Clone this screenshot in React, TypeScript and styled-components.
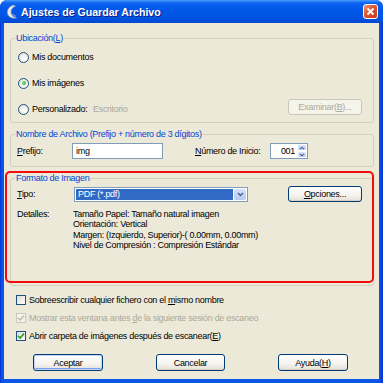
import React from "react";
import styled, { createGlobalStyle } from "styled-components";

const GlobalStyle = createGlobalStyle`
  html, body { margin: 0; padding: 0; background: #ffffff; }
  body {
    font-family: "Liberation Sans", Arial, sans-serif;
    font-size: 9px;
    letter-spacing: -0.3px;
    color: #000;
  }
`;

const Window = styled.div`
  width: 383px;
  height: 383px;
  display: flex;
  flex-direction: column;
  background: linear-gradient(to right, #0831D9 0, #0A56E6 2px, #0A56E6 379px, #0831D9 383px);
  border-radius: 7px 7px 0 0;
  overflow: hidden;
`;

const TitleBar = styled.div`
  height: 23px;
  flex: none;
  display: flex;
  align-items: center;
  padding: 0 5px 0 5px;
  background: linear-gradient(#4A9CFF 0, #0C63F0 3px, #0058EA 9px, #0054E3 17px, #0148D2 23px);
`;

const TitleText = styled.div`
  margin-left: 3px;
  font-weight: bold;
  font-size: 10.6px;
  letter-spacing: 0;
  color: #fff;
  text-shadow: 1px 1px 0 #0A1E8A;
  flex: 1;
`;

const CloseButton = styled.div`
  width: 15px;
  height: 15px;
  box-sizing: border-box;
  border: 1px solid #fff;
  border-radius: 3px;
  background: linear-gradient(135deg, #EE9E84 0%, #DF5A30 40%, #C9391A 100%);
  display: flex;
  align-items: center;
  justify-content: center;
`;

const Body = styled.div`
  flex: 1;
  margin: 0 4px 4px 4px;
  padding: 10px 5px 0 6px;
  background: #ECE9D8;
  display: flex;
  flex-direction: column;
`;

const Fieldset = styled.fieldset<{ $pb?: number }>`
  margin: 0;
  padding: 0 11px ${(p) => p.$pb ?? 0}px 6px;
  border: 1px solid #D0D0BF;
  border-radius: 3px;
  min-width: 0;
`;

const Legend = styled.legend`
  padding: 0 1px;
  margin-left: -2px;
  height: 11px;
  line-height: 11px;
  color: #0046D5;
`;

const GroupGap = styled.div<{ $h: number }>`
  height: ${(p) => p.$h}px;
  flex: none;
`;

const Highlight = styled.div`
  position: relative;
  &::after {
    content: "";
    position: absolute;
    left: -5px;
    top: -2px;
    right: 0;
    bottom: 3px;
    border: 2px solid #F20D0D;
    border-radius: 5px;
    pointer-events: none;
  }
`;

const RadioRow = styled.div`
  height: 26px;
  display: flex;
  align-items: center;
`;

const Radio = styled.span<{ $checked?: boolean }>`
  width: 11px;
  height: 11px;
  box-sizing: border-box;
  margin: 0 3px 0 1px;
  border-radius: 50%;
  border: 1px solid #1C5180;
  background: radial-gradient(circle at 65% 65%, #FFFFFF 0%, #F2F1EC 45%, #D8D6CC 100%);
  display: flex;
  align-items: center;
  justify-content: center;
  &::after {
    content: "";
    display: ${(p) => (p.$checked ? "block" : "none")};
    width: 4px;
    height: 4px;
    border-radius: 50%;
    background: radial-gradient(circle at 35% 35%, #7EE07E, #21A121);
  }
`;

const FixedLabel = styled.span<{ $w: number; $ml?: number }>`
  width: ${(p) => p.$w}px;
  margin-left: ${(p) => p.$ml ?? 0}px;
  flex: none;
  white-space: nowrap;
`;

const Muted = styled.span`
  color: #ACA899;
`;

const Button = styled.div<{ $w: number; $h?: number; $default?: boolean; $disabled?: boolean }>`
  width: ${(p) => p.$w}px;
  height: ${(p) => p.$h ?? 17}px;
  box-sizing: border-box;
  flex: none;
  display: flex;
  align-items: center;
  justify-content: center;
  border-radius: 3px;
  border: 1px solid ${(p) => (p.$disabled ? "#C9C7BA" : "#003C74")};
  color: ${(p) => (p.$disabled ? "#ACA899" : "#000")};
  background: ${(p) =>
    p.$disabled ? "#F5F4EA" : "linear-gradient(#FFFFFF 0%, #F4F3EE 60%, #E3E0D6 100%)"};
  box-shadow: ${(p) =>
    p.$default
      ? "inset 0 0 0 1px #C0D6F8, inset 0 -1px 0 1px #7F9FE8"
      : p.$disabled
      ? "none"
      : "inset 0 -1px 0 #D6D0C5"};
  white-space: nowrap;
`;

const PushRight = styled.div<{ $mb?: number }>`
  margin-left: auto;
  margin-bottom: ${(p) => p.$mb ?? 0}px;
`;

const FieldRow = styled.div<{ $mt: number }>`
  margin-top: ${(p) => p.$mt}px;
  height: 16px;
  display: flex;
  align-items: center;
`;

const TextBox = styled.div<{ $w: number }>`
  width: ${(p) => p.$w}px;
  height: 16px;
  box-sizing: border-box;
  border: 1px solid #7F9DB9;
  background: #fff;
  padding-left: 3px;
  display: flex;
  align-items: center;
`;

const Spin = styled.div`
  width: 38px;
  height: 16px;
  box-sizing: border-box;
  border: 1px solid #7F9DB9;
  background: #fff;
  display: flex;
`;

const SpinValue = styled.div`
  flex: 1;
  text-align: right;
  padding-right: 2px;
  line-height: 14px;
`;

const SpinButtons = styled.div`
  width: 10px;
  display: flex;
  flex-direction: column;
`;

const SpinButton = styled.div`
  flex: 1;
  display: flex;
  align-items: center;
  justify-content: center;
  background: linear-gradient(#D9E5FD, #B9CDF7);
  border: 1px solid #fff;
  border-radius: 2px;
`;

const Combo = styled.div`
  width: 174px;
  height: 15px;
  box-sizing: border-box;
  border: 1px solid #7F9DB9;
  background: #fff;
  padding: 1px;
  display: flex;
  align-self: flex-end;
`;

const ComboValue = styled.div`
  flex: 1;
  background: #316AC5;
  color: #fff;
  padding-left: 2px;
  line-height: 11px;
  margin-right: 1px;
`;

const ComboButton = styled.div`
  width: 12px;
  display: flex;
  align-items: center;
  justify-content: center;
  background: linear-gradient(#D6E2FC, #B4C8F5);
  border-radius: 2px;
`;

const Details = styled.div`
  margin-top: 7px;
  display: grid;
  grid-template-columns: 56px auto;
  line-height: 10.3px;
`;

const DetailLines = styled.div`
  display: flex;
  flex-direction: column;
`;

const CheckList = styled.div`
  margin-top: 5px;
  display: flex;
  flex-direction: column;
`;

const CheckRow = styled.div<{ $disabled?: boolean }>`
  height: 18px;
  display: flex;
  align-items: center;
  color: ${(p) => (p.$disabled ? "#ACA899" : "#000")};
`;

const Box = styled.span<{ $disabled?: boolean }>`
  width: 10px;
  height: 10px;
  box-sizing: border-box;
  margin: 0 3px 0 6px;
  border: 1px solid ${(p) => (p.$disabled ? "#CAC8BB" : "#1C5180")};
  background: ${(p) =>
    p.$disabled ? "#F5F4EA" : "linear-gradient(135deg, #DCDCD7 0%, #FFFFFF 100%)"};
  display: flex;
  align-items: center;
  justify-content: center;
`;

const ButtonRow = styled.div`
  margin-top: 9px;
  padding-left: 23px;
  display: flex;
  gap: 53px;
`;

const Check = ({ color }: { color: string }) => (
  <svg width="8" height="8" viewBox="0 0 8 8">
    <path d="M1 3.8 L3.1 6 L7 1.6" fill="none" stroke={color} strokeWidth="1.6" />
  </svg>
);

const Chevron = ({ up, size = 5 }: { up?: boolean; size?: number }) => (
  <svg width={size + 2} height={size} viewBox="0 0 7 5">
    <path
      d={up ? "M1 4 L3.5 1.5 L6 4" : "M1 1 L3.5 3.5 L6 1"}
      fill="none"
      stroke="#4D6185"
      strokeWidth="1.4"
    />
  </svg>
);

const AppIcon = () => (
  <svg width="13" height="16" viewBox="0 0 13 16">
    <path
      d="M9 1 C4 2 1.5 6 2.5 10 C3.5 13 7 15 11.5 14 C8 12.8 6 10.8 6 8 C6 5 8 3 10.5 2.2 Z"
      fill="#E4E9F3"
      stroke="#7D8CB0"
      strokeWidth="0.8"
    />
    <path d="M7 10 L11 12.5" stroke="#9AA6C4" strokeWidth="1" />
  </svg>
);

const App = () => {
  return (
    <>
      <GlobalStyle />
      <Window>
        <TitleBar>
          <AppIcon />
          <TitleText>Ajustes de Guardar Archivo</TitleText>
          <CloseButton>
            <svg width="9" height="9" viewBox="0 0 9 9">
              <path d="M1.5 1.5 L7.5 7.5 M7.5 1.5 L1.5 7.5" stroke="#fff" strokeWidth="1.8" />
            </svg>
          </CloseButton>
        </TitleBar>
        <Body>
          <Fieldset>
            <Legend>
              Ubicación(<u>L</u>)
            </Legend>
            <RadioRow>
              <Radio />
              <span>Mis documentos</span>
            </RadioRow>
            <RadioRow>
              <Radio $checked />
              <span>Mis imágenes</span>
            </RadioRow>
            <RadioRow>
              <Radio />
              <FixedLabel $w={61}>Personalizado:</FixedLabel>
              <Muted>Escritorio</Muted>
              <PushRight $mb={4}>
                <Button $w={74} $h={16} $disabled>
                  <span>
                    Examinar(<u>B</u>)...
                  </span>
                </Button>
              </PushRight>
            </RadioRow>
          </Fieldset>
          <GroupGap $h={6} />
          <Fieldset $pb={7}>
            <Legend>Nombre de Archivo (Prefijo + número de 3 dígitos)</Legend>
            <FieldRow $mt={3}>
              <FixedLabel $w={55}>
                <u>P</u>refijo:
              </FixedLabel>
              <TextBox $w={91}>img</TextBox>
              <FixedLabel $w={75} $ml={32}>
                <u>N</u>úmero de Inicio:
              </FixedLabel>
              <Spin>
                <SpinValue>001</SpinValue>
                <SpinButtons>
                  <SpinButton>
                    <Chevron up size={4} />
                  </SpinButton>
                  <SpinButton>
                    <Chevron size={4} />
                  </SpinButton>
                </SpinButtons>
              </Spin>
            </FieldRow>
          </Fieldset>
          <GroupGap $h={6} />
          <Highlight>
            <Fieldset $pb={35}>
              <Legend>Formato de Imagen</Legend>
              <FieldRow $mt={2}>
                <FixedLabel $w={57}>
                  <u>T</u>ipo:
                </FixedLabel>
                <Combo>
                  <ComboValue>PDF (*.pdf)</ComboValue>
                  <ComboButton>
                    <Chevron />
                  </ComboButton>
                </Combo>
                <PushRight>
                  <Button $w={74} $h={16}>
                    <span>
                      <u>O</u>pciones...
                    </span>
                  </Button>
                </PushRight>
              </FieldRow>
              <Details>
                <span>Detalles:</span>
                <DetailLines>
                  <span>Tamaño Papel: Tamaño natural imagen</span>
                  <span>Orientación: Vertical</span>
                  <span>Margen: (Izquierdo, Superior)-( 0.00mm, 0.00mm)</span>
                  <span>Nivel de Compresión : Compresión Estándar</span>
                </DetailLines>
              </Details>
            </Fieldset>
          </Highlight>
          <CheckList>
            <CheckRow>
              <Box />
              <span>
                Sobreescribir cualquier fichero con el <u>m</u>ismo nombre
              </span>
            </CheckRow>
            <CheckRow $disabled>
              <Box $disabled>
                <Check color="#C2C0B2" />
              </Box>
              <span>
                Mostrar esta ventana antes <u>d</u>e la siguiente sesión de escaneo
              </span>
            </CheckRow>
            <CheckRow>
              <Box>
                <Check color="#21A121" />
              </Box>
              <span>
                Abrir carpeta de imágenes después de escanear(<u>E</u>)
              </span>
            </CheckRow>
          </CheckList>
          <ButtonRow>
            <Button $w={70} $default>
              Aceptar
            </Button>
            <Button $w={69}>Cancelar</Button>
            <Button $w={70}>
              <span>
                Ayuda(<u>H</u>)
              </span>
            </Button>
          </ButtonRow>
        </Body>
      </Window>
    </>
  );
};

export default App;
